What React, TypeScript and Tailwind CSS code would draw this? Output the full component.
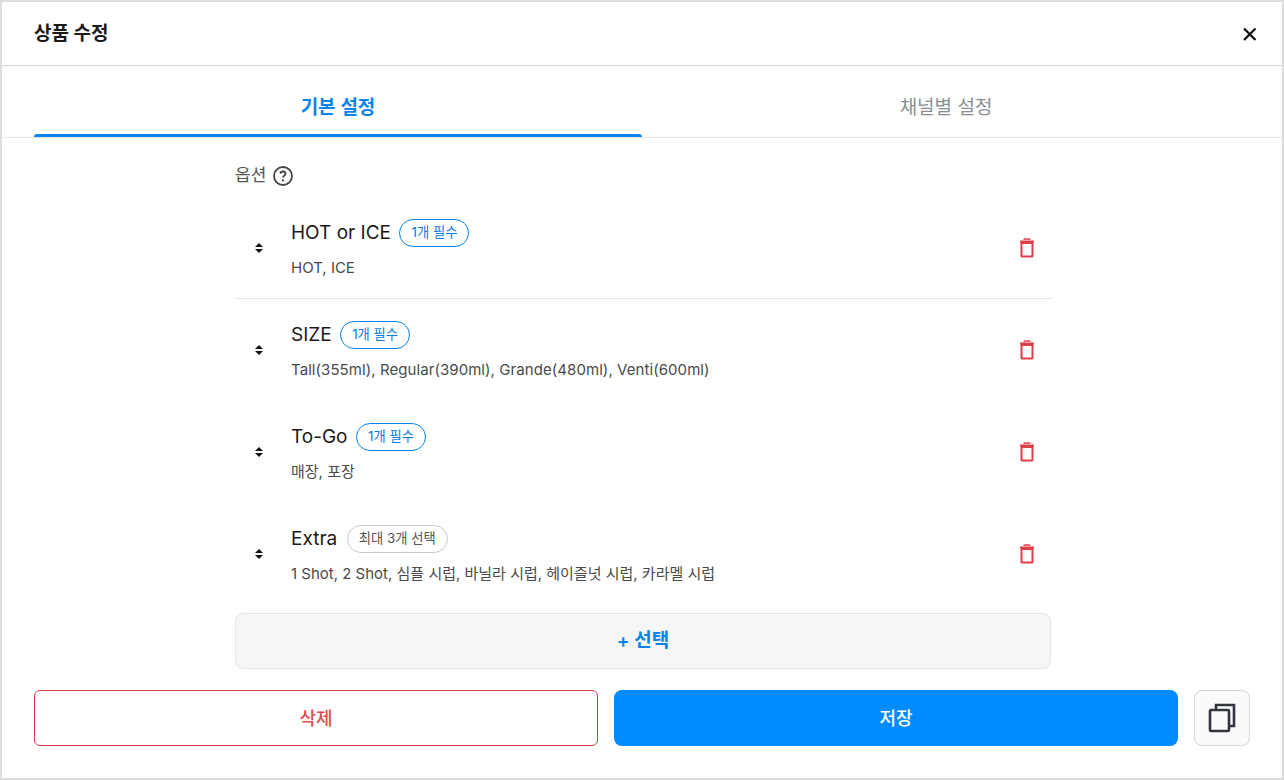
function Sort() {
  return (
    <svg width="10" height="12" viewBox="0 0 10 12" fill="#111">
      <path d="M5 1 L9 5 H1 Z" />
      <path d="M5 11 L1 7 H9 Z" />
    </svg>
  );
}

function Trash() {
  return (
    <svg width="16" height="20" viewBox="0 0 16 20" fill="none">
      <path d="M1 3.5 H15" stroke="#dc3f4a" strokeWidth="2" />
      <path d="M5 2 Q5 1 6 1 H10 Q11 1 11 2" stroke="#dc3f4a" strokeWidth="1.5" />
      <path d="M2.5 5 H13.5 V18 Q13.5 18.5 13 18.5 H3 Q2.5 18.5 2.5 18 Z" stroke="#dc3f4a" strokeWidth="2" />
    </svg>
  );
}

function Row({
  title,
  badge,
  desc,
  gray,
  divider,
  wide,
}: {
  title: string;
  badge: string;
  desc: string;
  gray?: boolean;
  divider?: boolean;
  wide?: boolean;
}) {
  return (
    <div className={`flex h-[102px] items-center border-b ${divider ? 'border-[#e5e5e5]' : 'border-transparent'}`}>
      <div className="mr-[8px] flex w-[48px] justify-center">
        <Sort />
      </div>
      <div className="min-w-0 flex-1">
        <div className="flex h-[28px] items-center">
          <span className="text-[19px] leading-[28px] text-[#1a1a1a]">{title}</span>
          <span
            className={`flex h-[28px] items-center rounded-full border px-[11px] text-[13.33px] ${
              gray ? 'ml-[9.5px] border-[#c9c9c9] text-[#555]' : 'ml-[8.5px] border-[#0a84e8] text-[#0a7ce0]'
            }`}
          >
            {badge}
          </span>
        </div>
        <div className={`mt-[11px] -mb-[1px] text-[15px] leading-[20px] text-[#4a4a4a] ${wide ? 'tracking-[0.07px]' : ''}`}>{desc}</div>
      </div>
      <div className="flex w-[48px] justify-center">
        <Trash />
      </div>
    </div>
  );
}

export default function App() {
  return (
    <div
      className="flex h-[780px] w-[1284px] flex-col border-2 border-[#dcdcdc] bg-white"
      style={{ fontFamily: "Inter, 'Noto Sans CJK KR', sans-serif" }}
    >
      <div className="flex h-[64px] shrink-0 items-center justify-between border-b border-[#d4d4d4] pl-[32px] pr-[25px]">
        <span className="pt-[2px] text-[19px] font-bold text-[#1a1a1a]">상품 수정</span>
        <svg width="16" height="16" viewBox="0 0 16 16" fill="none">
          <path d="M3 2.5 L14.5 14 M14.5 2.5 L3 14" stroke="#111" strokeWidth="2.3" />
        </svg>
      </div>

      <div className="flex h-[72px] shrink-0 border-b border-[#e5e5e5] px-[32px]">
        <div className="flex flex-1 flex-col">
          <div className="flex flex-1 items-center justify-center pt-[16px] text-[19px] font-semibold text-[#0a84e8]">
            기본 설정
          </div>
          <div className="h-[3px] rounded-t-[3px] bg-[#0a84e8]" />
        </div>
        <div className="flex flex-1 items-center justify-center pt-[13px] text-[19px] font-normal text-[#8b8f95]">
          채널별 설정
        </div>
      </div>

      <div className="flex flex-1 flex-col pl-[233px]">
        <div className="flex w-[816px] flex-1 flex-col">
          <div className="mt-[26px] flex h-[24px] items-center gap-[7px] text-[17px] text-[#555]">
            <span>옵션</span>
            <svg width="20" height="20" viewBox="0 0 20 20" fill="none">
              <circle cx="10" cy="10" r="9" stroke="#444" strokeWidth="1.8" />
              <path d="M7.5 7.8 C7.5 6.3 8.6 5.5 10 5.5 C11.4 5.5 12.5 6.4 12.5 7.7 C12.5 9.4 10 9.5 10 11.6" stroke="#444" strokeWidth="1.8" fill="none" />
              <circle cx="10" cy="14.4" r="1.1" fill="#444" />
            </svg>
          </div>
          <div className="mt-[9px]">
            <Row title="HOT or ICE" badge="1개 필수" desc="HOT, ICE" divider />
            <Row title="SIZE" badge="1개 필수" desc="Tall(355ml), Regular(390ml), Grande(480ml), Venti(600ml)" wide />
            <Row title="To-Go" badge="1개 필수" desc="매장, 포장" />
            <Row title="Extra" badge="최대 3개 선택" desc="1 Shot, 2 Shot, 심플 시럽, 바닐라 시럽, 헤이즐넛 시럽, 카라멜 시럽" gray />
          </div>
          <div className="mt-[8px] flex h-[56px] items-center justify-center rounded-[8px] border border-[#e6e6e6] bg-[#f6f6f6] text-[19px] font-semibold text-[#0a84e8]">
            + 선택
          </div>
        </div>
      </div>

      <div className="flex shrink-0 gap-[16px] pb-[32px] pl-[32px] pr-[32px]">
        <div className="flex h-[56px] w-[564px] items-center justify-center rounded-[6px] border border-[#dc3f4a] text-[18px] font-medium text-[#e5484d]">
          삭제
        </div>
        <div className="flex h-[56px] w-[564px] items-center justify-center rounded-[8px] bg-[#008cff] text-[18px] font-medium text-white">
          저장
        </div>
        <div className="flex h-[56px] w-[56px] shrink-0 items-center justify-center rounded-[8px] border border-[#d6d6d6] bg-[#fafafa]">
          <svg width="28" height="30" viewBox="0 0 28 30" fill="none" stroke="#33363f" strokeWidth="2.6">
            <path d="M8 6 V2 H26 V23 H21" />
            <rect x="2" y="7" width="19" height="21" rx="1" />
          </svg>
        </div>
      </div>
    </div>
  );
}
